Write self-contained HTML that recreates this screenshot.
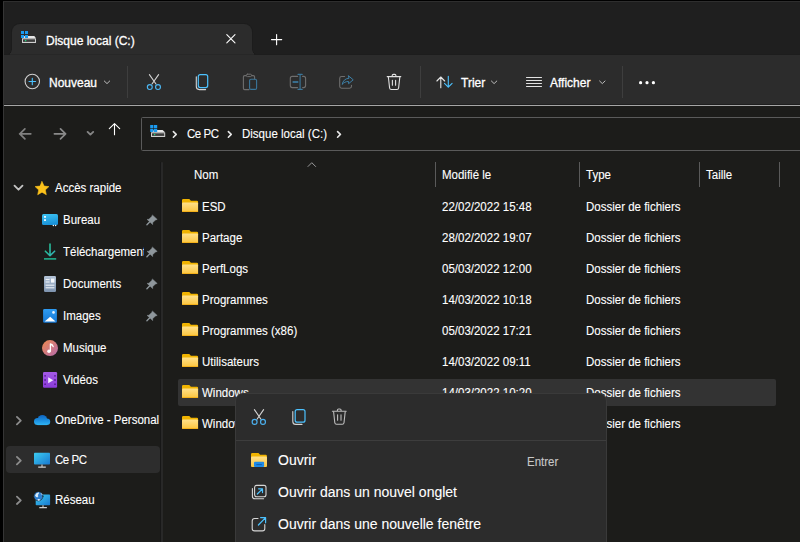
<!DOCTYPE html>
<html><head><meta charset="utf-8">
<style>
*{margin:0;padding:0;box-sizing:border-box}
html,body{width:800px;height:542px;overflow:hidden;background:#000}
body{position:relative;font-family:"Liberation Sans",sans-serif;color:#fff;font-size:11.5px}
.a{position:absolute}
.t{position:absolute;white-space:nowrap;line-height:14px;transform:scaleY(1.12);transform-origin:0 11px}
.n{transform:none}
.t{-webkit-text-stroke:0.1px #fff}
svg{position:absolute;overflow:visible}
</style></head><body>
<!-- window frame -->
<div class="a" style="left:3px;top:1px;width:797px;height:541px;background:#1c1c1a;border-left:1px solid #353535;border-top:1px solid #2e2e2e"></div>
<!-- tab strip -->
<div class="a" style="left:4px;top:2px;width:796px;height:52px;background:#1f1f1f"></div>
<!-- active tab -->
<div class="a" style="left:11px;top:23px;width:242px;height:32px;background:#1b1b1b;border-radius:9px 9px 0 0;opacity:.8"></div>
<div class="a" style="left:12px;top:24px;width:240px;height:31px;background:#2c2c2c;border-radius:8px 8px 0 0"></div>
<div class="a" style="left:7px;top:50px;width:5px;height:4px;background:radial-gradient(circle at 0 0,#1f1f1f 3.6px,#1b1b1b 4.3px,#2c2c2c 5px)"></div>
<div class="a" style="left:252px;top:50px;width:5px;height:4px;background:radial-gradient(circle at 100% 0,#1f1f1f 3.6px,#1b1b1b 4.3px,#2c2c2c 5px)"></div>
<!-- toolbar -->
<div class="a" style="left:4px;top:54px;width:796px;height:50px;background:#2c2c2c"></div>
<div class="a" style="left:4px;top:104px;width:796px;height:1px;background:#1e1e1e"></div>
<div class="a" style="left:4px;top:54px;width:796px;height:1px;background:#1d1d1d"></div><div class="a" style="left:10px;top:54px;width:244px;height:1px;background:#272727"></div>
<div class="a" style="left:4px;top:105px;width:796px;height:1px;background:#a6a6a6"></div>

<!-- tab content -->
<div class="t n" style="left:46px;top:33.5px;font-size:12px;-webkit-text-stroke:0.3px #fff">Disque local (C:)</div>

<!-- toolbar text -->
<div class="t n" style="left:49px;top:76px;font-size:12px;-webkit-text-stroke:0.3px #fff">Nouveau</div>
<div class="t n" style="left:461px;top:76px;font-size:12px;-webkit-text-stroke:0.3px #fff">Trier</div>
<div class="t n" style="left:550px;top:76px;font-size:12px;-webkit-text-stroke:0.3px #fff">Afficher</div>
<div class="a" style="left:127px;top:66px;width:1px;height:32px;background:#3e3e3e"></div>
<div class="a" style="left:420px;top:66px;width:1px;height:32px;background:#3e3e3e"></div>
<div class="a" style="left:622px;top:66px;width:1px;height:32px;background:#3e3e3e"></div>

<!-- address box -->
<div class="a" style="left:141px;top:117px;width:670px;height:34px;border:1px solid #5a5a5a;border-radius:1.5px"></div>
<div class="t" style="left:187px;top:126.5px;letter-spacing:-0.45px">Ce PC</div>
<div class="t" style="left:242px;top:126.5px">Disque local (C:)</div>

<!-- sidebar divider -->
<div class="a" style="left:160px;top:162px;width:1px;height:380px;background:#171717"></div><div class="a" style="left:161px;top:162px;width:2px;height:380px;background:#282828;border-radius:1px 1px 0 0"></div>

<!-- column headers -->
<div class="t" style="left:194px;top:168px">Nom</div>
<div class="t" style="left:442px;top:168px">Modifié le</div>
<div class="t" style="left:586px;top:168px">Type</div>
<div class="t" style="left:706px;top:168px">Taille</div>
<div class="a" style="left:435px;top:162px;width:1px;height:25px;background:#5a5a5a"></div>
<div class="a" style="left:579px;top:162px;width:1px;height:25px;background:#5a5a5a"></div>
<div class="a" style="left:699px;top:162px;width:1px;height:25px;background:#5a5a5a"></div>
<div class="a" style="left:779px;top:162px;width:1px;height:25px;background:#5a5a5a"></div>

<!-- sidebar -->
<div class="a" style="left:6px;top:446px;width:154px;height:27px;background:#2d2d2d;border-radius:4px"></div>
<div class="t" style="left:55px;top:181px">Accès rapide</div>
<div class="t" style="left:63px;top:213px">Bureau</div>
<div class="t" style="left:63px;top:245px;width:81px;overflow:hidden">Téléchargements</div>
<div class="t" style="left:63px;top:277px">Documents</div>
<div class="t" style="left:63px;top:309px">Images</div>
<div class="t" style="left:63px;top:341px">Musique</div>
<div class="t" style="left:63px;top:373px">Vidéos</div>
<div class="t" style="left:55px;top:413px;width:105px;overflow:hidden">OneDrive - Personal</div>
<div class="t" style="left:55px;top:453px;letter-spacing:-0.45px">Ce PC</div>
<div class="t" style="left:55px;top:493px">Réseau</div>

<!-- file list -->
<div class="a" style="left:178px;top:379px;width:598px;height:26.5px;background:#333;border-radius:2px"></div>
<div class="t" style="left:202px;top:200px">ESD</div>
<div class="t" style="left:442px;top:200px">22/02/2022 15:48</div>
<div class="t" style="left:586px;top:200px">Dossier de fichiers</div>
<div class="t" style="left:202px;top:231px">Partage</div>
<div class="t" style="left:442px;top:231px">28/02/2022 19:07</div>
<div class="t" style="left:586px;top:231px">Dossier de fichiers</div>
<div class="t" style="left:202px;top:262px">PerfLogs</div>
<div class="t" style="left:442px;top:262px">05/03/2022 12:00</div>
<div class="t" style="left:586px;top:262px">Dossier de fichiers</div>
<div class="t" style="left:202px;top:293px">Programmes</div>
<div class="t" style="left:442px;top:293px">14/03/2022 10:18</div>
<div class="t" style="left:586px;top:293px">Dossier de fichiers</div>
<div class="t" style="left:202px;top:324px">Programmes (x86)</div>
<div class="t" style="left:442px;top:324px">05/03/2022 17:21</div>
<div class="t" style="left:586px;top:324px">Dossier de fichiers</div>
<div class="t" style="left:202px;top:355px">Utilisateurs</div>
<div class="t" style="left:442px;top:355px">14/03/2022 09:11</div>
<div class="t" style="left:586px;top:355px">Dossier de fichiers</div>
<div class="t" style="left:202px;top:386px">Windows</div>
<div class="t" style="left:442px;top:386px">14/03/2022 10:20</div>
<div class="t" style="left:586px;top:386px">Dossier de fichiers</div>
<div class="t" style="left:202px;top:417px">Windows.old</div>
<div class="t" style="left:442px;top:417px">14/03/2022 10:21</div>
<div class="t" style="left:586px;top:417px">Dossier de fichiers</div>

<svg class="a" style="left:0;top:0" width="800" height="542" viewBox="0 0 800 542">
<defs>
<linearGradient id="gDesk" x1="0" y1="0" x2="0.3" y2="1"><stop offset="0" stop-color="#3ec6f4"/><stop offset="1" stop-color="#1a92d8"/></linearGradient>
<linearGradient id="gDl" x1="0" y1="0" x2="1" y2="1"><stop offset="0" stop-color="#1fc08a"/><stop offset="1" stop-color="#35b2b8"/></linearGradient>
<linearGradient id="gDoc" x1="0" y1="0" x2="0" y2="1"><stop offset="0" stop-color="#b4c4d8"/><stop offset="1" stop-color="#7d93ae"/></linearGradient>
<linearGradient id="gImg" x1="0" y1="0" x2="0" y2="1"><stop offset="0" stop-color="#2e9cf2"/><stop offset="1" stop-color="#1577d4"/></linearGradient>
<linearGradient id="gMus" x1="0" y1="0" x2="1" y2="1"><stop offset="0" stop-color="#f08a4e"/><stop offset="1" stop-color="#b36aae"/></linearGradient>
<linearGradient id="gVid" x1="0" y1="0" x2="0" y2="1"><stop offset="0" stop-color="#a45ae6"/><stop offset="1" stop-color="#8a3bd9"/></linearGradient>
<linearGradient id="gCloud2" gradientUnits="userSpaceOnUse" x1="0" y1="415" x2="0" y2="425"><stop offset="0" stop-color="#0f64c0"/><stop offset="0.55" stop-color="#1c8fe0"/><stop offset="1" stop-color="#2fb4f4"/></linearGradient>
<linearGradient id="gPC" x1="0" y1="0" x2="1" y2="1"><stop offset="0" stop-color="#3ccdf2"/><stop offset="1" stop-color="#1978d0"/></linearGradient>
<linearGradient id="gFold" x1="0" y1="0" x2="0" y2="1"><stop offset="0" stop-color="#ffe08a"/><stop offset="1" stop-color="#fbc53e"/></linearGradient>
<linearGradient id="gGlobe" x1="0" y1="0" x2="1" y2="1"><stop offset="0" stop-color="#cfe6f8"/><stop offset="1" stop-color="#2f86d6"/></linearGradient>
<g id="folder">
<path d="M182 200.2q0-1.3 1.3-1.3h6l1.6 1.9h6q1.2 0 1.2 1.2v2h-16.1z" fill="#f0b300"/>
<rect x="182" y="202.6" width="16.1" height="9.3" rx="1" fill="url(#gFold)"/>
<rect x="182" y="211" width="16.1" height="0.9" fill="#f2ae18"/>
</g>
</defs>
<g fill="none" stroke-linecap="round" stroke-linejoin="round">
<!-- tab drive icon -->
<path d="M24.5 36h9.8l1.7 2.2h-14z" fill="#e6e6e6" stroke="none"/>
<rect x="22" y="38.2" width="14" height="4.8" rx="0.6" fill="#cfcfcf" stroke="none"/>
<rect x="23" y="39.3" width="12" height="2.6" fill="#3c3c3c" stroke="none"/>
<circle cx="25.6" cy="40.6" r="0.8" fill="#22d07a" stroke="none"/>
<g fill="#1b9bf0" stroke="none"><rect x="21" y="31" width="3" height="3"/><rect x="25" y="31" width="3" height="3"/><rect x="21" y="35" width="3" height="3"/><rect x="25" y="35" width="3" height="3"/></g>
<!-- tab close / new -->
<path d="M226.8 34.6l8.2 8.2M235 34.6l-8.2 8.2" stroke="#fff" stroke-width="1.1"/>
<path d="M276.6 34.5v10.2M271.5 39.6h10.2" stroke="#fff" stroke-width="1.1"/>
<!-- Nouveau -->
<circle cx="32.3" cy="81.5" r="7.2" stroke="#cfcfcf" stroke-width="1.1"/>
<path d="M32.3 78.2v6.6M29 81.5h6.6" stroke="#4cc2ff" stroke-width="1.1"/>
<path d="M104.3 81l2.7 2.6 2.7-2.6" stroke="#bdbdbd" stroke-width="1"/>
<!-- scissors -->
<path d="M149.4 74.6l6.6 9.4M158.6 74.6l-6.6 9.4" stroke="#d4d4d4" stroke-width="1.1"/>
<circle cx="149.8" cy="87" r="2.45" stroke="#4cb6f2" stroke-width="1.15"/>
<circle cx="158" cy="87" r="2.45" stroke="#4cb6f2" stroke-width="1.15"/>
<!-- copy -->
<path d="M196.3 76.8v9.8q0 3 3 3h6.3" stroke="#d4d4d4" stroke-width="1.1"/>
<rect x="198.3" y="74.6" width="9.4" height="13" rx="2" stroke="#4cc2ff" stroke-width="1.2"/>
<!-- paste disabled -->
<path d="M246 75.6h-1.3q-1.3 0-1.3 1.3v11.4q0 1.3 1.3 1.3h4.3M251.7 75.6h1.6q1.3 0 1.3 1.3v2" stroke="#6e6e6e" stroke-width="1.1"/>
<rect x="246.3" y="74.2" width="5.2" height="2.4" rx="1.1" stroke="#6e6e6e" stroke-width="1"/>
<rect x="249.6" y="79.2" width="7" height="10.2" rx="1.4" stroke="#3a7599" stroke-width="1.1"/>
<!-- rename disabled -->
<path d="M297.6 76.4h-5.3q-2 0-2 2v7.2q0 2 2 2h5.3M302.6 76.4h1q2 0 2 2v7.2q0 2 -2 2h-1" stroke="#6e6e6e" stroke-width="1.1"/>
<path d="M300.1 74.4v15M298 74.4h4.2M298 89.4h4.2" stroke="#3a7599" stroke-width="1.1"/>
<path d="M292.6 82h5.7" stroke="#3a7599" stroke-width="1.8" stroke-linecap="butt"/>
<!-- share disabled -->
<path d="M344.6 76.5h-3q-1.9 0-1.9 1.9v7.9q0 1.9 1.9 1.9h8q1.9 0 1.9-1.9v-1" stroke="#6e6e6e" stroke-width="1.1"/>
<path d="M348.6 75.9l4.6 3.9-4.6 3.9v-2.2c-2.9-0.1-4.9 1.1-6.4 2.9 0.7-3.6 2.9-5.8 6.4-6.1z" stroke="#3d7fa6" stroke-width="1"/>
<!-- trash -->
<path d="M387.2 76.6h13.6M392.2 76.4v-0.8q0-1.2 1.2-1.2h1.3q1.2 0 1.2 1.2v0.8" stroke="#e0e0e0" stroke-width="1.1"/>
<path d="M388.4 77.2l1.2 10.8q0.2 1.5 1.7 1.5h5.6q1.5 0 1.7-1.5l1.2-10.8" stroke="#e0e0e0" stroke-width="1.1"/>
<path d="M392.4 80.2v5M395.6 80.2v5" stroke="#e0e0e0" stroke-width="1.1"/>
<!-- sort -->
<path d="M440.8 77v10.7M436.9 81l3.9-4 3.9 4" stroke="#e6e6e6" stroke-width="1.1"/>
<path d="M448.3 76.2v11M444.5 83.3l3.8 3.9 3.8-3.9" stroke="#4cc2ff" stroke-width="1.1"/>
<path d="M491.4 81l2.7 2.6 2.7-2.6" stroke="#bdbdbd" stroke-width="1"/>
<!-- view lines -->
<path d="M526.5 77.5h15M526.5 80.5h15M526.5 83.5h15M526.5 86.5h15" stroke="#e2e2e2" stroke-width="1.1"/>
<path d="M599.6 81l2.7 2.6 2.7-2.6" stroke="#bdbdbd" stroke-width="1"/>
<g fill="#fff" stroke="none"><circle cx="640.6" cy="82.7" r="1.6"/><circle cx="647" cy="82.7" r="1.6"/><circle cx="653.4" cy="82.7" r="1.6"/></g>
<!-- nav -->
<path d="M19.6 133.8h11.2M24.9 128.8l-5.1 5 5.1 5" stroke="#808080" stroke-width="1.7"/>
<path d="M54.4 133.8h11.2M60.5 128.8l5.1 5-5.1 5" stroke="#8a8a8a" stroke-width="1.7"/>
<path d="M87.6 131.9l2.8 2.7 2.8-2.7" stroke="#858585" stroke-width="1.9"/>
<path d="M114.5 123.6v11.2M109.3 128.7l5.2-5.1 5.2 5.1" stroke="#fff" stroke-width="1.1"/>
<!-- breadcrumb drive -->
<path d="M154 130h8.6l2.4 2.2h-14z" fill="#e6e6e6" stroke="none"/>
<rect x="151" y="132.2" width="14.2" height="4.8" rx="0.6" fill="#cfcfcf" stroke="none"/>
<rect x="152" y="133.3" width="12.2" height="2.6" fill="#3c3c3c" stroke="none"/>
<circle cx="154.6" cy="134.6" r="0.8" fill="#22d07a" stroke="none"/>
<g fill="#1b9bf0" stroke="none"><rect x="150.2" y="125" width="3.2" height="3.2"/><rect x="154" y="125" width="3.2" height="3.2"/><rect x="150.2" y="128.8" width="3.2" height="3.2"/><rect x="154" y="128.8" width="3.2" height="3.2"/></g>
<path d="M173.4 131.6l2.8 2.8-2.8 2.8M228.4 131.6l2.8 2.8-2.8 2.8M337.6 131.6l2.8 2.8-2.8 2.8" stroke="#e6e6e6" stroke-width="1.6"/>
<!-- header caret -->
<path d="M308 166.5l3.8-3.8 3.8 3.8" stroke="#9a9a9a" stroke-width="1"/>
<!-- sidebar chevrons -->
<path d="M14.5 185.7l4 4 4-4" stroke="#c4c4c4" stroke-width="1.8"/>
<path d="M16.9 416.9l3.9 3.7-3.9 3.7M16.9 456.9l3.9 3.7-3.9 3.7M16.9 496.6l3.9 3.7-3.9 3.7" stroke="#8c8c8c" stroke-width="1.8"/>
<!-- star -->
<path d="M42 181.6l2.1 4.5 4.8 0.5-3.6 3.3 1 4.8-4.3-2.5-4.3 2.5 1-4.8-3.6-3.3 4.8-0.5z" fill="#fcc21b" stroke="#fcc21b" stroke-width="0.6"/>
<!-- desktop -->
<rect x="42" y="214" width="16" height="11" rx="1.5" fill="url(#gDesk)" stroke="none"/>
<rect x="44" y="216" width="2" height="1.8" fill="#e8f6ff" stroke="none"/><rect x="44" y="219.2" width="2" height="1.8" fill="#e8f6ff" stroke="none"/>
<circle cx="53.4" cy="225.4" r="0.75" fill="#f0f8ff" stroke="none"/><circle cx="55.6" cy="225.4" r="0.75" fill="#f0f8ff" stroke="none"/>
<!-- download -->
<path d="M50 244v11M45.4 251.2l4.6 4.5 4.6-4.5" stroke="url(#gDl)" stroke-width="1.6"/>
<path d="M44 258.9h12.2" stroke="#20b894" stroke-width="1.5" stroke-linecap="butt"/>
<!-- documents -->
<rect x="44" y="276" width="12" height="16" rx="1.2" fill="url(#gDoc)" stroke="none"/>
<path d="M45.6 279.6h4M45.6 282h4M45.6 285.2h8.8M45.6 287.8h8.8" stroke="#f4f7fb" stroke-width="1" stroke-linecap="butt"/>
<rect x="51" y="278.6" width="3.4" height="4" fill="#f4f7fb" stroke="none"/>
<!-- images -->
<rect x="43.1" y="308.9" width="13.8" height="13.9" rx="1.4" fill="url(#gImg)" stroke="none"/>
<path d="M44.6 321.6l5.6-4.9 5.4 4.9z" fill="#fff" stroke="none"/>
<circle cx="53.5" cy="312.4" r="1.3" fill="#eaf4ff" stroke="none"/>
<!-- music -->
<circle cx="50" cy="348.1" r="8" fill="url(#gMus)" stroke="none"/>
<path d="M50.4 351v-7q2.2 0.5 2.8 2.6" stroke="#fff" stroke-width="1.3"/>
<circle cx="49" cy="351.2" r="1.8" fill="#fff" stroke="none"/>
<!-- videos -->
<rect x="43" y="372" width="14.1" height="15.7" rx="1.2" fill="url(#gVid)" stroke="none"/>
<g fill="#5a1d95" stroke="none"><circle cx="45.1" cy="375.8" r="0.9"/><circle cx="45.1" cy="380" r="0.9"/><circle cx="45.1" cy="384.2" r="0.9"/><circle cx="55" cy="375.8" r="0.9"/><circle cx="55" cy="380" r="0.9"/><circle cx="55" cy="384.2" r="0.9"/></g>
<path d="M48.2 377.3v5.9l5-2.95z" fill="#f4ecff" stroke="none"/>
<!-- pins -->
<g id="pin"><path d="M152.6 215.2l4.6 4.2-1.8 0.6-2.8 2.8 0.1 1.8-5.6-5.2 1.8-0.1 2.8-2.8z" fill="#8f979c" stroke="#8f979c" stroke-width="0.5"/><path d="M149.6 222l-2.7 2.8" stroke="#8f979c" stroke-width="1.3"/></g>
<use href="#pin" transform="translate(0,32)"/>
<use href="#pin" transform="translate(0,64)"/>
<use href="#pin" transform="translate(0,96)"/>
<!-- onedrive -->
<g fill="url(#gCloud2)" stroke="none"><circle cx="37.6" cy="421.5" r="3.6"/><circle cx="42.4" cy="419.6" r="4.7"/><circle cx="46.9" cy="421.8" r="3.3"/><rect x="37.6" y="421" width="9.3" height="4.1"/></g>
<!-- PC -->
<rect x="34" y="452.7" width="16" height="11.8" rx="0.8" fill="url(#gPC)" stroke="none"/>
<path d="M42 464.5v2.4M38.2 467.1h7.6" stroke="#cfcfcf" stroke-width="1.1" stroke-linecap="butt"/>
<!-- network -->
<rect x="35.7" y="494.6" width="14.4" height="10.7" rx="0.8" fill="url(#gPC)" stroke="none"/>
<path d="M43 505.3v2M39.3 507.6h7.6" stroke="#cfcfcf" stroke-width="1.1" stroke-linecap="butt"/>
<circle cx="38.4" cy="496.3" r="4.6" fill="#2f7fcf" stroke="#1c1c1a" stroke-width="0.6"/><path d="M35 495.5q1-3 3.8-3.2 0.6 1.6-1 2.6 1.4 1.4-0.6 2.6-1.4-0.6-2.2-2z M37.5 499.2q1.8-0.6 3 0.8-1 0.9-2.6 0.8z M40.6 493q1.6 0.6 2.2 2-1.4 0.2-2.2-2z" fill="#dceefb" stroke="none"/>
</g>
<!-- folders -->
<use href="#folder"/>
<use href="#folder" transform="translate(0,31)"/>
<use href="#folder" transform="translate(0,62)"/>
<use href="#folder" transform="translate(0,93)"/>
<use href="#folder" transform="translate(0,124)"/>
<use href="#folder" transform="translate(0,155)"/>
<use href="#folder" transform="translate(0,186)"/>
<use href="#folder" transform="translate(0,217)"/>
</svg>

<!-- context menu -->
<div class="a" style="left:235px;top:393px;width:372px;height:160px;background:#2c2c2c;border:1px solid #3a3a3a;border-radius:8px"></div>
<div class="a" style="left:236px;top:440px;width:370px;height:1px;background:#3d3d3d"></div>
<div class="t n" style="left:278px;top:452px;font-size:14px;line-height:16px">Ouvrir</div>
<div class="t" style="left:527px;top:454.8px;color:#c8c8c8;-webkit-text-stroke:0.1px #c8c8c8">Entrer</div>
<div class="t n" style="left:278px;top:484px;font-size:14px;line-height:16px">Ouvrir dans un nouvel onglet</div>
<div class="t n" style="left:278px;top:516px;font-size:14px;line-height:16px">Ouvrir dans une nouvelle fenêtre</div>
<svg class="a" style="left:0;top:0" width="800" height="542" viewBox="0 0 800 542">
<defs><linearGradient id="gFold2" x1="0" y1="0" x2="0" y2="1"><stop offset="0" stop-color="#ffe08a"/><stop offset="1" stop-color="#fbc53e"/></linearGradient></defs>
<g fill="none" stroke-linecap="round" stroke-linejoin="round">
<!-- scissors -->
<path d="M254.4 409.6l6.6 9.6M263.6 409.6l-6.6 9.6" stroke="#d4d4d4" stroke-width="1.1"/>
<circle cx="254.6" cy="421.9" r="2.45" stroke="#4cb0ee" stroke-width="1.2"/>
<circle cx="263" cy="421.9" r="2.45" stroke="#4cb0ee" stroke-width="1.2"/>
<!-- copy -->
<path d="M292.8 411.6v9.8q0 3 3 3h6.2" stroke="#d4d4d4" stroke-width="1.1"/>
<rect x="295.2" y="409.6" width="9.8" height="12.6" rx="2" stroke="#4cc2ff" stroke-width="1.2"/>
<!-- trash -->
<path d="M332.4 411.3h13.8M337.4 411v-0.8q0-1.2 1.2-1.2h1.3q1.2 0 1.2 1.2v0.8" stroke="#bdbdbd" stroke-width="1.1"/>
<path d="M333.6 411.8l1.2 11q0.2 1.5 1.7 1.5h5.8q1.5 0 1.7-1.5l1.2-11" stroke="#bdbdbd" stroke-width="1.1"/>
<path d="M337.6 414.8v5.4M341 414.8v5.4" stroke="#bdbdbd" stroke-width="1.1"/>
<!-- open folder -->
<path d="M251 454.2q0-1.3 1.3-1.3h6.2l1.6 1.9h5.6q1.2 0 1.2 1.2v2h-15.9z" fill="#f0b300" stroke="none"/>
<rect x="251" y="456.6" width="16" height="10.4" rx="1" fill="url(#gFold2)" stroke="none"/>
<rect x="254" y="461.7" width="10.1" height="5.3" rx="1" fill="#1f8ae6" stroke="none"/>
<path d="M256.4 464.6h5.4" stroke="#0d5fb3" stroke-width="1" stroke-linecap="butt"/>
<!-- new tab -->
<path d="M252.4 488.6v7.6q0 2.6 2.6 2.6h8.6" stroke="#d6d6d6" stroke-width="1.1"/>
<rect x="254.6" y="485.4" width="11.4" height="11.4" rx="2" stroke="#d6d6d6" stroke-width="1.1"/>
<path d="M257.3 494l5.2-5.2M258.6 488.8h3.9v3.8" stroke="#4cc2ff" stroke-width="1.2"/>
<!-- new window -->
<path d="M258 518.5h-3.4q-2.4 0-2.4 2.4v7.6q0 2.4 2.4 2.4h7.8q2.4 0 2.4-2.4v-4" stroke="#d6d6d6" stroke-width="1.1"/>
<path d="M258.4 525l7.2-7.4M260.6 517.6h5v5.2" stroke="#4cc2ff" stroke-width="1.2"/>
</g>
</svg>

</body></html>
